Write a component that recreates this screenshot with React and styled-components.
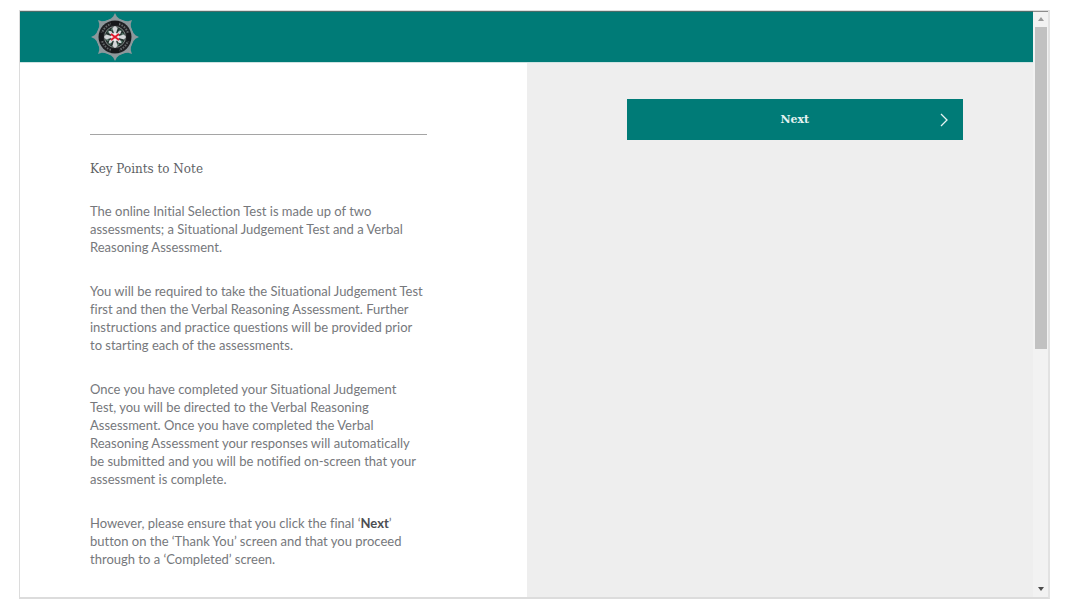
import React from "react";
import styled, { createGlobalStyle } from "styled-components";

const paragraphs = [
  [
    "The online Initial Selection Test is made up of two",
    "assessments; a Situational Judgement Test and a Verbal",
    "Reasoning Assessment.",
  ],
  [
    "You will be required to take the Situational Judgement Test",
    "first and then the Verbal Reasoning Assessment. Further",
    "instructions and practice questions will be provided prior",
    "to starting each of the assessments.",
  ],
  [
    "Once you have completed your Situational Judgement",
    "Test, you will be directed to the Verbal Reasoning",
    "Assessment. Once you have completed the Verbal",
    "Reasoning Assessment your responses will automatically",
    "be submitted and you will be notified on-screen that your",
    "assessment is complete.",
  ],
];

function Crest() {
  const rays = [0, 45, 90, 135, 180, 225, 270, 315];
  return (
    <CrestSvg viewBox="-24 -24 48 48" role="img" aria-label="Police crest">
      {rays.map((angle) => (
        <path
          key={angle}
          d="M-9 -16L-4 -18.500L-1.800 -20.500L0 -24L1.800 -20.500L4 -18.500L9 -16L0 0Z"
          transform={`rotate(${angle})`}
          fill="#8d989c"
        />
      ))}
      <circle r="18" fill="#8d989c" />
      <circle r="16.500" fill="#1f2023" />
      <circle r="13.500" fill="none" stroke="#66696b" strokeWidth="2" strokeDasharray="1.5 1.3" />
      <path
        d="M-4 -14H4M-4 14H4M-14 -4V4M14 -4V4"
        stroke="#17181b"
        strokeWidth="4"
      />
      <circle r="10.500" fill="#25332f" stroke="#7c8583" strokeWidth="1" />
      <circle r="8" fill="none" stroke="#5b7f71" strokeWidth="2" strokeDasharray="2 2.200" />
      {rays.map((angle) => (
        <path
          key={angle}
          d={angle % 90 === 0 ? "M0 0L-2.600 -9L0 -11L2.600 -9Z" : "M0 0L-1.500 -6.500L0 -9L1.500 -6.500Z"}
          transform={`rotate(${angle})`}
          fill="#d3d6d8"
        />
      ))}
      <circle r="4" fill="#f4eeee" />
      <path d="M-4 -3L4 3M4 -3L-4 3" stroke="#e3192d" strokeWidth="2" />
    </CrestSvg>
  );
}

export default function App() {
  return (
    <>
      <GlobalStyle />
      <Page>
        <Frame>
          <Screen>
            <Header>
              <Crest />
            </Header>
            <Columns>
              <Instructions>
                <Divider />
                <Title>Key Points to Note</Title>
                {paragraphs.map((lines) => (
                  <Text key={lines[0]}>{lines.join("\n")}</Text>
                ))}
                <Text>
                  However, please ensure that you click the final ‘<strong>Next</strong>’
                  {"\n"}button on the ‘Thank You’ screen and that you proceed
                  {"\n"}through to a ‘Completed’ screen.
                </Text>
              </Instructions>
              <Actions>
                <NextButton type="button">
                  <span>Next</span>
                  <svg width="10" height="14" viewBox="0 0 10 14" aria-hidden="true">
                    <path d="M2 1L8 7L2 13" fill="none" stroke="currentColor" strokeWidth="1.3" />
                  </svg>
                </NextButton>
              </Actions>
            </Columns>
          </Screen>
          <ScrollTrack aria-hidden="true">
            <ScrollArrow viewBox="0 0 12 15">
              <path d="M3 9L6 5L9 9Z" fill="#9b9b9b" />
            </ScrollArrow>
            <ScrollThumb />
            <ScrollArrow viewBox="0 0 12 15">
              <path d="M3 5L6 9L9 5Z" fill="#4b4b4b" />
            </ScrollArrow>
          </ScrollTrack>
        </Frame>
      </Page>
    </>
  );
}

const GlobalStyle = createGlobalStyle`
  * {
    box-sizing: border-box;
  }
  body {
    margin: 0;
    background: #fff;
    color: #76787c;
    font-family: Lato, "Liberation Sans", sans-serif;
    font-size: 13px;
    font-variant-ligatures: none;
    line-height: 18px;
  }
`;

const Page = styled.div`
  display: flex;
  min-height: 100vh;
  padding: 10px 26px 6px 19px;
`;

const Frame = styled.div`
  flex: 1;
  display: flex;
  border: 1px solid #dcdcdc;
  border-bottom-width: 2px;
  border-right: 2px solid #e2e2e2;
`;

const Screen = styled.div`
  flex: 1;
  display: flex;
  flex-direction: column;
`;

const Header = styled.header`
  height: 52px;
  padding: 1px 70px;
  border-top: 1px solid #4b6b69;
  border-bottom: 1px solid #cfe3e2;
  background: #007b77;
`;

const CrestSvg = styled.svg`
  display: block;
  width: 50px;
  height: 48px;
`;

const Columns = styled.div`
  flex: 1;
  display: grid;
  grid-template-columns: 1fr 1fr;
`;

const Instructions = styled.main`
  padding: 71px 100px 24px 70px;
`;

const Divider = styled.hr`
  margin: 0 0 25px;
  border: 0;
  border-top: 1px solid #a5a5a5;
`;

const Title = styled.h1`
  margin: 0 0 24px;
  color: #606266;
  font-family: "DejaVu Serif", serif;
  font-size: 12px;
  font-weight: 400;
  line-height: 18px;
`;

const Text = styled.p`
  margin: 0 0 26px;
  white-space: pre;

  &:last-child {
    margin-bottom: 0;
  }
  strong {
    color: #4c4e52;
  }
`;

const Actions = styled.aside`
  padding: 36px 70px 36px 100px;
  background: #eee;
`;

const NextButton = styled.button`
  display: grid;
  grid-template-columns: 1fr auto 1fr;
  align-items: center;
  width: 100%;
  height: 41px;
  padding: 0 14px;
  border: 0;
  background: #007b77;
  color: #e6f3f2;
  font-family: "DejaVu Serif", serif;
  font-size: 11px;
  font-weight: 700;
  cursor: pointer;

  span {
    grid-column: 2;
  }
  svg {
    justify-self: end;
  }
`;

const ScrollTrack = styled.div`
  display: flex;
  flex-direction: column;
  width: 15px;
  padding: 0 1px 0 2px;
  border-top: 1px solid #8c8c8c;
  background: #f2f2f2;
`;

const ScrollArrow = styled.svg`
  width: 12px;
  height: 15px;
`;

const ScrollThumb = styled.div`
  flex: 1;

  &::before {
    content: "";
    display: block;
    height: 58%;
    background: #c1c1c1;
  }
`;
